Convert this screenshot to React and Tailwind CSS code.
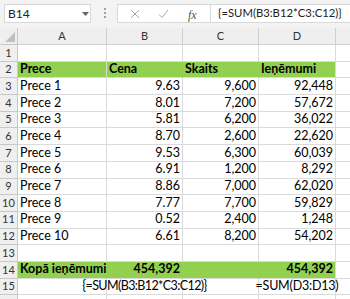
import React from "react";

const rows = [
  ["Prece 1", "9.63", "9,600", "92,448"],
  ["Prece 2", "8.01", "7,200", "57,672"],
  ["Prece 3", "5.81", "6,200", "36,022"],
  ["Prece 4", "8.70", "2,600", "22,620"],
  ["Prece 5", "9.53", "6,300", "60,039"],
  ["Prece 6", "6.91", "1,200", "8,292"],
  ["Prece 7", "8.86", "7,000", "62,020"],
  ["Prece 8", "7.77", "7,700", "59,829"],
  ["Prece 9", "0.52", "2,400", "1,248"],
  ["Prece 10", "6.61", "8,200", "54,202"],
];

const font = { fontFamily: "Lato, 'Open Sans', 'Liberation Sans', sans-serif" };

function RowHead({ n }) {
  return (
    <div className="h-[16.7px] bg-[#efefef] border-r border-b border-[#c8c8c8] flex items-center justify-center text-[11px] text-[#333]">
      {n}
    </div>
  );
}

function Cell({ children, cls = "" }) {
  return (
    <div className={"h-[16.7px] border-r border-b border-[#dadada] flex items-center px-[2px] text-[12.5px] text-black whitespace-nowrap " + cls}>
      {children}
    </div>
  );
}

export default function App() {
  return (
    <div className="w-[350px] h-[299px] overflow-hidden bg-white" style={font}>
      {/* formula bar */}
      <div className="h-[28px] bg-[#f3f3f3] flex items-center relative">
        <div className="absolute left-[4px] top-[4px] w-[87px] h-[19px] bg-white border border-[#d9d9d9] flex items-center pl-[3px] text-[12px] text-[#222]">
          B14
          <svg className="absolute left-[77px] top-[7px]" width="7" height="4" viewBox="0 0 7 4"><path d="M0 0h7L3.5 4z" fill="#666" /></svg>
        </div>
        <div className="absolute left-[104px] top-[8px] flex flex-col gap-[2px]">
          <div className="w-[2px] h-[2px] bg-[#a0a0a0]" />
          <div className="w-[2px] h-[2px] bg-[#a0a0a0]" />
          <div className="w-[2px] h-[2px] bg-[#a0a0a0]" />
        </div>
        <div className="absolute left-[117px] top-[4px] w-[94px] h-[19px] bg-white border border-[#d9d9d9]">
          <svg className="absolute left-[12px] top-[4px]" width="10" height="10" viewBox="0 0 10 10"><path d="M1 1L9 9M9 1L1 9" stroke="#a8a8a8" strokeWidth="1" /></svg>
          <svg className="absolute left-[40px] top-[4px]" width="11" height="10" viewBox="0 0 11 10"><path d="M1 5.5L4 8.5L10 1" stroke="#a8a8a8" strokeWidth="1" fill="none" /></svg>
          <span className="absolute left-[70px] top-[1px] text-[12px] italic text-[#555]" style={{ fontFamily: "'Liberation Serif', serif" }}>fx</span>
        </div>
        <div className="absolute left-[210px] top-[4px] w-[145px] h-[19px] bg-white border border-[#d9d9d9] flex items-center pl-[7px] text-[11.3px] text-[#222]">
          {"{=SUM(B3:B12*C3:C12)}"}
        </div>
      </div>
      {/* sheet */}
      <div className="grid grid-cols-[18px_89px_76px_76px_77px_30px]">
        {/* column header */}
        <div className="h-[17px] bg-[#efefef] border-r border-b border-[#c8c8c8] relative">
          <svg className="absolute right-[2px] bottom-[2px]" width="10" height="10" viewBox="0 0 10 10"><path d="M10 0V10H0z" fill="#c0c0c0" /></svg>
        </div>
        {["A", "B", "C", "D", ""].map((c, i) => (
          <div key={i} className="h-[17px] bg-[#efefef] border-r border-b border-[#d0d0d0] flex items-center justify-center text-[11px] text-[#333]">{c}</div>
        ))}
        {/* row 1 */}
        <RowHead n={1} />
        <Cell /><Cell /><Cell /><Cell /><Cell />
        {/* row 2 */}
        <RowHead n={2} />
        <Cell cls="bg-[#92d050] font-bold">Prece</Cell>
        <Cell cls="bg-[#92d050] font-bold border-r-[#92d050]">Cena</Cell>
        <Cell cls="bg-[#92d050] font-bold border-r-[#92d050]">Skaits</Cell>
        <Cell cls="bg-[#92d050] font-bold">Ieņēmumi</Cell>
        <Cell />
        {rows.map((r, i) => (
          <React.Fragment key={i}>
            <RowHead n={i + 3} />
            <Cell>{r[0]}</Cell>
            <Cell cls="justify-end">{r[1]}</Cell>
            <Cell cls="justify-end">{r[2]}</Cell>
            <Cell cls="justify-end">{r[3]}</Cell>
            <Cell />
          </React.Fragment>
        ))}
        <RowHead n={13} />
        <Cell /><Cell /><Cell /><Cell /><Cell />
        <RowHead n={14} />
        <Cell cls="bg-[#92d050] font-bold border-r-[#92d050] overflow-visible">Kopā ieņēmumi</Cell>
        <Cell cls="bg-[#92d050] font-bold justify-end border-r-[#92d050]">454,392</Cell>
        <Cell cls="bg-[#92d050] border-r-[#92d050]" />
        <Cell cls="bg-[#92d050] font-bold justify-end">454,392</Cell>
        <Cell />
        <RowHead n={15} />
        <Cell />
        <Cell cls="justify-center overflow-visible relative z-10 bg-transparent text-[11.5px] tracking-[-0.6px]">{"{=SUM(B3:B12*C3:C12)}"}</Cell>
        <Cell />
        <Cell cls="justify-center overflow-visible text-[11.5px] tracking-[-0.2px]">{"=SUM(D3:D13)"}</Cell>
        <Cell />
        <RowHead n={16} />
        <Cell /><Cell /><Cell /><Cell /><Cell />
      </div>
    </div>
  );
}
